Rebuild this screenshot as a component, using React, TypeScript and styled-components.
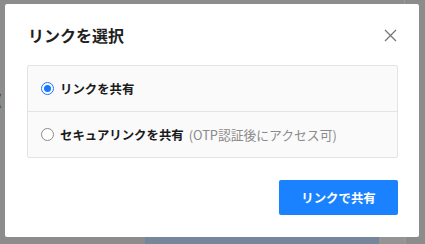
import React, { useState } from "react";
import styled, { createGlobalStyle } from "styled-components";

const GlobalStyle = createGlobalStyle`
  html, body { margin: 0; padding: 0; }
  body {
    background: #8c8c8c;
    font-family: "Noto Sans CJK JP", "Noto Sans", sans-serif;
    width: 425px;
    height: 244px;
    overflow: hidden;
  }
`;

const Page = styled.div`
  position: relative;
  width: 425px;
  height: 244px;
  padding: 4px 0 0 5px;
  box-sizing: border-box;
`;

const BackdropBlock = styled.div`
  position: absolute;
  left: 145px;
  top: 237px;
  width: 234px;
  height: 7px;
  background: #76879b;
`;

const BackdropStrip = styled.div`
  position: absolute;
  left: 379px;
  top: 237px;
  width: 26px;
  height: 7px;
  background: #949494;
  border-right: 1px solid #9a9a9a;
`;

const BackdropLine = styled.div`
  position: absolute;
  left: 404px;
  top: 0;
  width: 1px;
  height: 4px;
  background: #9a9a9a;
`;

const BackdropParen = styled.span`
  position: absolute;
  left: -3px;
  top: 91px;
  font-size: 14px;
  line-height: 16px;
  color: #3a3f48;
`;

const Modal = styled.div`
  position: relative;
  width: 414px;
  height: 233px;
  background: #ffffff;
  border-radius: 2px;
  padding: 0 21px 0 22px;
  box-sizing: border-box;
  display: flex;
  flex-direction: column;
`;

const Header = styled.div`
  display: flex;
  align-items: center;
  justify-content: space-between;
  padding-top: 19px;
  height: 24px;
  margin-bottom: 18px;
`;

const Title = styled.h2`
  margin: 0 0 0 1px;
  font-size: 16px;
  line-height: 24px;
  font-weight: 700;
  color: #1f1f1f;
`;

const CloseButton = styled.button`
  border: none;
  background: transparent;
  padding: 0;
  width: 13px;
  height: 13px;
  display: flex;
  align-items: center;
  justify-content: center;
  cursor: pointer;
  margin-right: 1px;
`;

const OptionBox = styled.div`
  border: 1px solid #e3e3e3;
  border-radius: 2px;
  background: #fafafa;
  display: flex;
  flex-direction: column;
`;

const OptionRow = styled.label<{ $divider?: boolean }>`
  height: 45px;
  display: flex;
  align-items: center;
  padding-left: 13px;
  gap: 6px;
  border-top: ${(p) => (p.$divider ? "1px solid #e3e3e3" : "none")};
  cursor: pointer;
`;

const RadioCircle = styled.span<{ $checked: boolean }>`
  width: 11px;
  height: 11px;
  border-radius: 50%;
  border: 1px solid ${(p) => (p.$checked ? "#1677ff" : "#8a8a8a")};
  background: #ffffff;
  display: flex;
  align-items: center;
  justify-content: center;
  flex-shrink: 0;
  &::after {
    content: "";
    width: 7px;
    height: 7px;
    border-radius: 50%;
    background: ${(p) => (p.$checked ? "#1677ff" : "transparent")};
  }
`;

const OptionLabel = styled.span`
  font-size: 12.4px;
  font-weight: 700;
  color: #1a1a1a;
  line-height: 18px;
  white-space: nowrap;
`;

const OptionNote = styled.span`
  font-size: 12.8px;
  font-weight: 400;
  color: #8a8a8a;
  margin-left: 5px;
`;

const Footer = styled.div`
  display: flex;
  justify-content: flex-end;
  margin-top: 22px;
`;

const PrimaryButton = styled.button`
  width: 119px;
  height: 35px;
  border: none;
  border-radius: 2px;
  background: #1a82ff;
  color: #ffffff;
  font-family: "Noto Sans CJK JP", "Noto Sans", sans-serif;
  font-size: 12.4px;
  font-weight: 700;
  cursor: pointer;
  padding: 0;
`;

export default function App() {
  const [choice, setChoice] = useState<"link" | "secure">("link");
  return (
    <>
      <GlobalStyle />
      <Page>
        <BackdropParen>(</BackdropParen>
        <BackdropLine />
        <BackdropBlock />
        <BackdropStrip />
        <Modal>
          <Header>
            <Title>リンクを選択</Title>
            <CloseButton aria-label="閉じる">
              <svg width="13" height="13" viewBox="0 0 13 13">
                <path
                  d="M1 1 L12 12 M12 1 L1 12"
                  stroke="#777777"
                  strokeWidth="1.3"
                  fill="none"
                />
              </svg>
            </CloseButton>
          </Header>
          <OptionBox>
            <OptionRow onClick={() => setChoice("link")}>
              <RadioCircle $checked={choice === "link"} />
              <OptionLabel>リンクを共有</OptionLabel>
            </OptionRow>
            <OptionRow $divider onClick={() => setChoice("secure")}>
              <RadioCircle $checked={choice === "secure"} />
              <OptionLabel>
                セキュアリンクを共有
                <OptionNote>(OTP認証後にアクセス可)</OptionNote>
              </OptionLabel>
            </OptionRow>
          </OptionBox>
          <Footer>
            <PrimaryButton>リンクで共有</PrimaryButton>
          </Footer>
        </Modal>
      </Page>
    </>
  );
}
